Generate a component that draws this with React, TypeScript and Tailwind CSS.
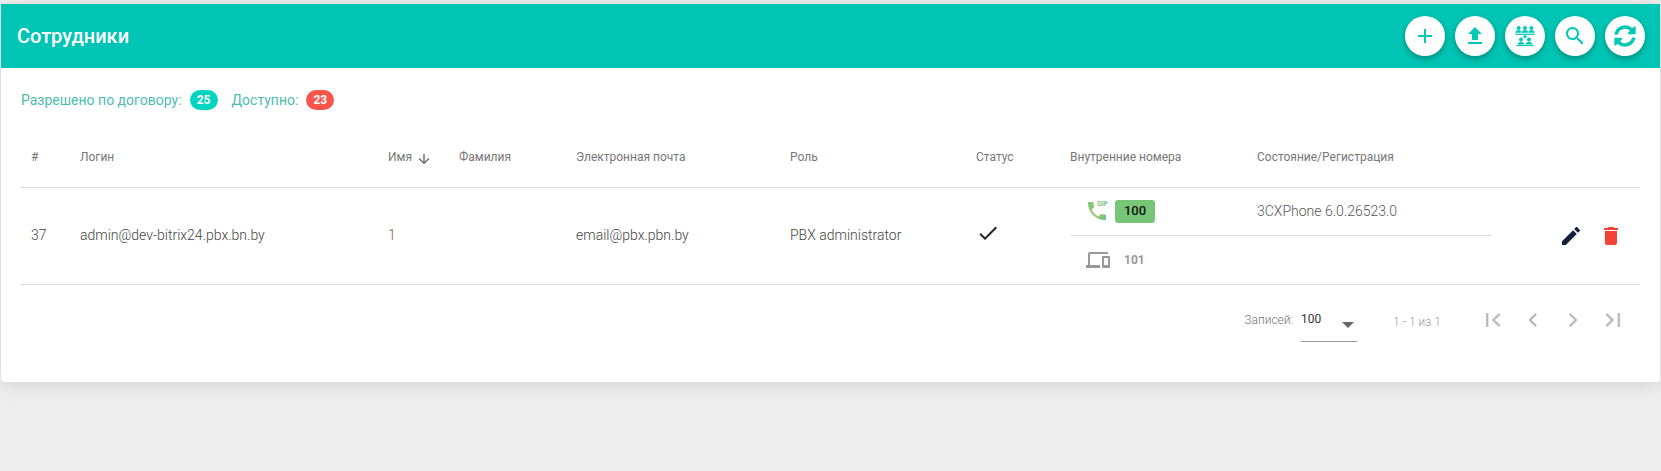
import React from "react";

const P = {
  plus: "M19 13h-6v6h-2v-6H5v-2h6V5h2v6h6v2z",
  upload: "M9 16h6v-6h4l-7-7-7 7h4zm-4 2h14v2H5z",
  search: "M15.5 14h-.79l-.28-.27C15.41 12.59 16 11.11 16 9.5 16 5.91 13.09 3 9.5 3S3 5.91 3 9.5 5.91 16 9.5 16c1.61 0 3.09-.59 4.23-1.57l.27.28v.79l5 4.99L20.49 19l-4.99-5zm-6 0C7.01 14 5 11.99 5 9.5S7.01 5 9.5 5 14 7.01 14 9.5 11.99 14 9.5 14z",
  edit: "M3 17.25V21h3.75L17.81 9.94l-3.75-3.75L3 17.25zM20.71 7.04c.39-.39.39-1.02 0-1.41l-2.34-2.34c-.39-.39-1.02-.39-1.41 0l-1.83 1.83 3.75 3.75 1.83-1.83z",
  del: "M6 19c0 1.1.9 2 2 2h8c1.1 0 2-.9 2-2V7H6v12zM19 4h-3.5l-1-1h-5l-1 1H5v2h14V4z",
  check: "M9 16.17L4.83 12l-1.42 1.41L9 19 21 7l-1.41-1.41z",
  phone: "M6.62 10.79c1.44 2.83 3.76 5.14 6.59 6.59l2.2-2.2c.27-.27.67-.36 1.02-.24 1.12.37 2.33.57 3.57.57.55 0 1 .45 1 1V20c0 .55-.45 1-1 1-9.39 0-17-7.61-17-17 0-.55.45-1 1-1h3.5c.55 0 1 .45 1 1 0 1.25.2 2.45.57 3.57.11.35.03.74-.25 1.02l-2.2 2.2z",
  devices: "M4 6h18V4H4c-1.1 0-2 .9-2 2v11H0v3h14v-3H4V6zm19 2h-6c-.55 0-1 .45-1 1v10c0 .55.45 1 1 1h6c.55 0 1-.45 1-1V9c0-.55-.45-1-1-1zm-1 9h-4v-7h4v7z",
  down: "M20 12l-1.41-1.41L13 16.17V4h-2v12.17l-5.58-5.59L4 12l8 8 8-8z",
  first: "M18.41 16.59L13.82 12l4.59-4.59L17 6l-6 6 6 6zM6 6h2v12H6z",
  prev: "M15.41 7.41L14 6l-6 6 6 6 1.41-1.41L10.83 12z",
  next: "M10 6L8.59 7.41 13.17 12l-4.58 4.59L10 18l6-6z",
  last: "M5.59 7.41L10.18 12l-4.59 4.59L7 18l6-6-6-6zM16 6h2v12h-2z",
};

function Icon({ d, className }: { d: string; className: string }) {
  return (
    <svg viewBox="0 0 24 24" className={className} fill="currentColor">
      <path d={d} />
    </svg>
  );
}

function GroupIcon() {
  const head = (x: number, y: number) => (
    <g key={`${x}-${y}`}>
      <circle cx={x} cy={y} r="2" />
      <path d={`M${x - 3.2} ${y + 4.8}c0-1.8 1.5-2.7 3.2-2.7s3.2 .9 3.2 2.7z`} />
    </g>
  );
  return (
    <svg viewBox="0 0 24 24" className="w-6 h-6 text-[#00c9b5]" fill="currentColor">
      {head(5.6, 4)}
      {head(12, 4)}
      {head(18.4, 4)}
      <rect x="2.4" y="9.7" width="19.2" height="1.2" />
      <path d="M11.2 10.9h1.6v1.3h1.8L12 14.6l-2.6-2.4h1.8z" />
      {head(8, 15.6)}
      {head(16, 15.6)}
      <rect x="3.5" y="20.9" width="17" height="1.2" />
    </svg>
  );
}

function RefreshBold() {
  return (
    <svg viewBox="0 0 512 512" className="w-[22px] h-[22px] text-[#00c9b5]" fill="currentColor">
      <path d="M370.72 133.28C339.458 104.008 298.888 87.962 255.848 88c-77.458.068-144.328 53.178-162.791 126.85-1.344 5.363-6.122 9.15-11.651 9.15H24.103c-7.498 0-13.194-6.807-11.807-14.176C33.933 94.924 134.813 8 256 8c66.448 0 126.791 26.136 171.315 68.685L463.03 40.97C478.149 25.851 504 36.559 504 57.941V192c0 13.255-10.745 24-24 24H345.941c-21.382 0-32.09-25.851-16.971-40.971l41.75-41.749zM32 296h134.059c21.382 0 32.09 25.851 16.971 40.971l-41.75 41.75c31.262 29.273 71.835 45.319 114.876 45.28 77.418-.07 144.315-53.144 162.787-126.849 1.344-5.363 6.122-9.15 11.651-9.15h57.304c7.498 0 13.194 6.807 11.807 14.176C478.067 417.076 377.187 504 256 504c-66.448 0-126.791-26.136-171.315-68.685L48.97 471.03C33.851 486.149 8 475.441 8 454.059V320c0-13.255 10.745-24 24-24z" />
    </svg>
  );
}

function RoundButton({ children }: { children: React.ReactNode }) {
  return (
    <button className="w-10 h-10 rounded-full bg-white flex items-center justify-center shadow-[0_3px_6px_rgba(0,0,0,0.28)]">
      {children}
    </button>
  );
}

const th = "text-left font-normal text-[12px] text-[#777] px-0 align-middle";
const headers: [string, string][] = [
  ["#", "w-[59px] pl-[10px]"],
  ["Логин", "w-[308px]"],
  ["Имя", "w-[71px]"],
  ["Фамилия", "w-[117px]"],
  ["Электронная почта", "w-[214px]"],
  ["Роль", "w-[186px]"],
  ["Статус", "w-[94px]"],
  ["Внутренние номера", "w-[187px]"],
  ["Состояние/Регистрация", "w-[234px]"],
];

export default function App() {
  return (
    <div
      className="min-h-[471px] bg-[#eeeeee] pt-1 px-px"
      style={{ fontFamily: "Roboto, 'Liberation Sans', sans-serif" }}
    >
      <div className="h-[378px] bg-white rounded-b shadow-[0_2px_20px_rgba(0,0,0,0.13)]">
        <div className="h-16 bg-[#00c5b4] flex items-center justify-between pl-4 pr-[15px]">
          <h1 className="text-[20px] font-medium text-white">Сотрудники</h1>
          <div className="flex items-center gap-[10px]">
            <RoundButton><Icon d={P.plus} className="w-6 h-6 text-[#00c9b5]" /></RoundButton>
            <RoundButton><Icon d={P.upload} className="w-6 h-6 text-[#00c9b5]" /></RoundButton>
            <RoundButton><GroupIcon /></RoundButton>
            <RoundButton><Icon d={P.search} className="w-6 h-6 text-[#00c9b5]" /></RoundButton>
            <RoundButton><RefreshBold /></RoundButton>
          </div>
        </div>

        <div className="flex items-center h-[20px] mt-[22px] pl-5 text-[14px] text-[#4dbdb0]">
          <span>Разрешено по договору:</span>
          <span className="ml-2 w-7 h-5 rounded-full bg-[#00d6bf] text-white text-[12px] font-bold flex items-center justify-center">25</span>
          <span className="ml-[14px]">Доступно:</span>
          <span className="ml-2 w-7 h-5 rounded-full bg-[#f9554c] text-white text-[12px] font-bold flex items-center justify-center">23</span>
        </div>

        <div className="pl-5 pr-5 mt-[18px]">
          <table className="w-[1619px] table-fixed border-collapse text-[#555]">
            <thead>
              <tr className="h-[59px] border-b border-[#ddd]">
                {headers.map(([h, w]) => (
                  <th key={h} className={`${th} ${w}`}>
                    {h === "Имя" ? (
                      <span className="flex items-center gap-[4px]">
                        {h}
                        <Icon d={P.down} className="w-4 h-4 text-[#666] mt-[3px]" />
                      </span>
                    ) : (
                      h
                    )}
                  </th>
                ))}
                <th className={th} />
              </tr>
            </thead>
            <tbody>
              <tr className="h-[97px] border-b border-[#ddd] text-[14px] font-light text-[#444]">
                <td className="pl-[10px]">37</td>
                <td>admin@dev-bitrix24.pbx.bn.by</td>
                <td className="text-[#7f6347]">1</td>
                <td />
                <td>email@pbx.pbn.by</td>
                <td>PBX administrator</td>
                <td>
                  <Icon d={P.check} className="w-6 h-6 text-[#222] -mt-[6px]" />
                </td>
                <td colSpan={2} className="align-top">
                  <div className="w-[421px]">
                    <div className="h-[48px] flex items-center border-b border-[#ddd]">
                      <div className="w-[187px] flex items-center shrink-0">
                        <span className="relative w-[29px] h-[24px] ml-[15px] text-[#7cc576]">
                          <svg viewBox="0 0 24 24" className="w-6 h-6">
                            <defs>
                              <linearGradient id="sipPhone" x1="0" y1="0" x2="1" y2="1">
                                <stop offset="0" stopColor="#7cc576" />
                                <stop offset="0.7" stopColor="#9ccb6a" />
                                <stop offset="1" stopColor="#4fc3b4" />
                              </linearGradient>
                            </defs>
                            <path d={P.phone} fill="url(#sipPhone)" />
                          </svg>
                          <span className="absolute left-[12px] top-[2px] text-[7px] font-bold leading-none">SIP</span>
                        </span>
                        <span className="ml-[1px] w-10 h-[23px] rounded-[3px] bg-[#77c677] text-[#111] text-[13px] font-medium flex items-center justify-center">100</span>
                      </div>
                      <span className="text-[#555]">3CXPhone 6.0.26523.0</span>
                    </div>
                    <div className="h-[48px] flex items-center pt-[1px]">
                      <Icon d={P.devices} className="ml-[16px] w-6 h-6 text-[#999]" />
                      <span className="ml-[14px] text-[12px] font-bold text-[#999]">101</span>
                    </div>
                  </div>
                </td>
                <td>
                  <div className="flex items-center gap-[16px] pl-[68px]">
                    <Icon d={P.edit} className="w-6 h-6 text-[#14213d]" />
                    <Icon d={P.del} className="w-6 h-6 text-[#f44336]" />
                  </div>
                </td>
              </tr>
            </tbody>
          </table>

          <div className="flex items-start justify-end mt-[15px] pr-[13px]">
            <span className="text-[12px] font-light text-[#777] mt-[11px]">Записей:</span>
            <div className="ml-2 w-14 h-[42px] border-b border-[#999] relative text-[12px] text-[#333] pt-[10px]">
              100
              <svg viewBox="0 0 10 5" className="absolute right-[3px] top-[22px] w-[12px] h-[6px] text-[#666]" fill="currentColor"><path d="M0 0h10L5 5z" /></svg>
            </div>
            <span className="ml-9 text-[12px] font-light text-[#999] mt-[13px]">1 - 1 из 1</span>
            <div className="flex ml-[38px] gap-[12px] mt-[6px]">
              <Icon d={P.first} className="w-7 h-7 text-[#bbb]" />
              <Icon d={P.prev} className="w-7 h-7 text-[#bbb]" />
              <Icon d={P.next} className="w-7 h-7 text-[#bbb]" />
              <Icon d={P.last} className="w-7 h-7 text-[#bbb]" />
            </div>
          </div>
        </div>
      </div>
    </div>
  );
}
